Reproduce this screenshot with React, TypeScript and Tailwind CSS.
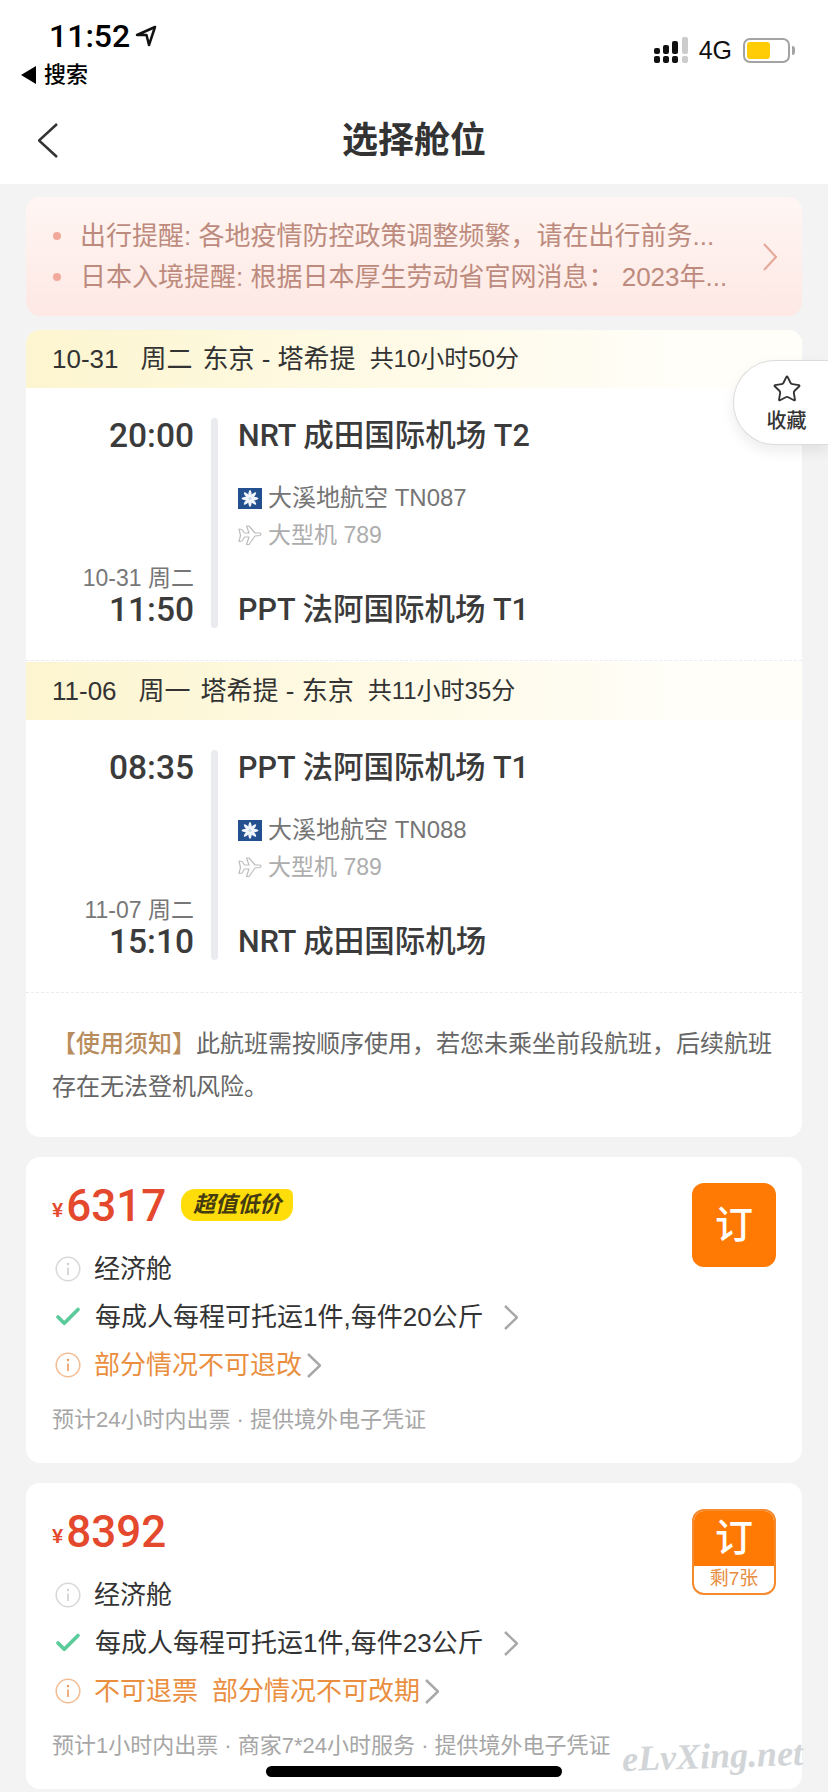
import { Check, Star } from "lucide-react";

const segments = [
  {
    date: "10-31",
    week: "周二",
    route: "东京 - 塔希提",
    total: "共10小时50分",
    depart: "20:00",
    from: "NRT 成田国际机场 T2",
    airline: "大溪地航空 TN087",
    arriveDate: "10-31 周二",
    arrive: "11:50",
    to: "PPT 法阿国际机场 T1",
  },
  {
    date: "11-06",
    week: "周一",
    route: "塔希提 - 东京",
    total: "共11小时35分",
    depart: "08:35",
    from: "PPT 法阿国际机场 T1",
    airline: "大溪地航空 TN088",
    arriveDate: "11-07 周二",
    arrive: "15:10",
    to: "NRT 成田国际机场",
  },
];

const nameFont = { fontFamily: 'Roboto, "Noto Sans CJK SC", sans-serif' };

// tall thin chevron, lucide's is too squat for this screen
function Chevron({ w, h, color, width = 2, left = false }: { w: number; h: number; color: string; width?: number; left?: boolean }) {
  const d = left ? `M${w - 1} 1L1 ${h / 2}L${w - 1} ${h - 1}` : `M1 1L${w - 1} ${h / 2}L1 ${h - 1}`;
  return (
    <svg width={w} height={h} viewBox={`0 0 ${w} ${h}`} fill="none" stroke={color} strokeWidth={width} className="shrink-0">
      <path d={d} />
    </svg>
  );
}

function InfoIcon({ color, dot }: { color: string; dot: string }) {
  return (
    <svg width="26" height="26" viewBox="0 0 26 26" fill="none" className="ml-[3px] shrink-0">
      <circle cx="13" cy="13" r="11.8" stroke={color} strokeWidth="1.5" />
      <circle cx="13" cy="8" r="1.2" fill={dot} />
      <path d="M13 11.5v7.5" stroke={dot} strokeWidth="1.6" />
    </svg>
  );
}

function TahitiLogo() {
  return (
    <svg width="24" height="21" viewBox="0 0 24 21">
      <rect width="24" height="21" fill="#25508f" />
      <g fill="#f1f5fb">
        {[0, 45, 90, 135].map((a) => (
          <ellipse key={a} cx="12" cy="10.5" rx="2" ry="8.5" transform={`rotate(${a} 12 10.5)`} />
        ))}
      </g>
      <circle cx="12" cy="10.5" r="1.5" fill="#c9d6e8" />
    </svg>
  );
}

function PlaneIcon() {
  return (
    <svg width="24" height="21" viewBox="0 0 24 21" fill="none" stroke="#bdbdbd" strokeWidth="1.2" strokeLinejoin="round">
      <path d="M1 4l3 .5 2.5 3.5H11L8.5 1H11l6 7h4.5c1.5 0 2 1.5.5 2.5l-5 .5-6 8.5H8.5L11 12H6.5L4 16l-3 .5 1.5-6z" />
    </svg>
  );
}

function Segment({ s }: { s: (typeof segments)[number] }) {
  return (
    <div className="h-[330px]">
      <div className="flex h-[58px] items-center bg-gradient-to-r from-[#fdf5cf] to-[#fffef8] to-85% pl-[26px] text-[26px] text-[#333333]">
        <span>{s.date}</span>
        <span className="ml-[22px]">{s.week}</span>
        <span className="ml-[10px]">{s.route}</span>
        <span className="ml-[14px] text-[24px]">{s.total}</span>
      </div>
      <div className="mt-[30px] flex h-[210px]">
        <div className="flex w-[168px] flex-col items-end justify-between text-[#3b3b3b]" style={nameFont}>
          <span className="text-[33.5px] leading-[36px] font-medium">{s.depart}</span>
          <div className="flex flex-col items-end">
            <span className="text-[23px] leading-[28px] text-[#777777]" style={{ fontFamily: '"Liberation Sans", "Noto Sans CJK SC", sans-serif' }}>
              {s.arriveDate}
            </span>
            <span className="text-[33.5px] leading-[36px] font-medium">{s.arrive}</span>
          </div>
        </div>
        <div className="ml-[17px] w-[7px] rounded-full bg-[#e9ebef]" />
        <div className="ml-[20px] flex flex-col text-[#3b3b3b]">
          <span className="text-[30.5px] leading-[36px] font-medium" style={nameFont}>
            {s.from}
          </span>
          <div className="mt-[32px] flex flex-col gap-[13px]">
            <div className="flex h-[24px] items-center gap-[6px] text-[24px] text-[#757575]">
              <TahitiLogo />
              <span>{s.airline}</span>
            </div>
            <div className="flex h-[24px] items-center gap-[6px] text-[23px] text-[#adadad]">
              <PlaneIcon />
              <span>大型机 789</span>
            </div>
          </div>
          <span className="mt-auto text-[30.5px] leading-[36px] font-medium" style={nameFont}>
            {s.to}
          </span>
        </div>
      </div>
    </div>
  );
}

function Fare({
  price,
  badge,
  baggage,
  warnings,
  note,
  left,
}: {
  price: string;
  badge?: string;
  baggage: string;
  warnings: string[];
  note: string;
  left?: string;
}) {
  return (
    <div className="relative h-[306px] rounded-[14px] bg-white pt-[27px] pl-[26px]">
      <div className="flex h-[44px] items-center">
        <span className="mt-[8px] mr-[3px] text-[20px] font-semibold text-[#e5492d]">¥</span>
        <span className="text-[44px] leading-[44px] font-medium text-[#e5492d]" style={nameFont}>
          {price}
        </span>
        {badge && (
          <span className="mb-[3px] ml-[15px] flex h-[32px] w-[112px] items-center justify-center rounded-tl-[14px] rounded-tr-[6px] rounded-br-[14px] rounded-bl-[14px] bg-[#ffdd0a] text-[22px] font-bold text-[#443c10] italic">
            {badge}
          </span>
        )}
      </div>
      <div className="mt-[17px] flex h-[48px] items-center">
        <InfoIcon color="#d8d8d8" dot="#cfcfcf" />
        <span className="ml-[13px] text-[26px] text-[#333333]">经济舱</span>
      </div>
      <div className="flex h-[48px] items-center">
        <Check size={30} strokeWidth={3} className="ml-[1px] text-[#5ccb9c]" />
        <span className="ml-[12px] text-[26px] text-[#333333]">{baggage}</span>
        <span className="ml-[20px]">
          <Chevron w={14} h={25} color="#a8a8a8" width={2.5} />
        </span>
      </div>
      <div className="flex h-[48px] items-center">
        <InfoIcon color="#f3bd93" dot="#ee9a5b" />
        <span className="ml-[13px] flex gap-[14px] text-[26px] text-[#ea8f40]">
          {warnings.map((w) => (
            <span key={w}>{w}</span>
          ))}
        </span>
        <span className="ml-[5px]">
          <Chevron w={14} h={25} color="#a8a8a8" width={2.5} />
        </span>
      </div>
      <div className="mt-[13px] text-[22px] leading-[36px] text-[#a6a6a6]">{note}</div>
      <div className={`absolute top-[26px] right-[26px] flex w-[84px] flex-col overflow-hidden rounded-[12px] ${left ? "border-2 border-[#f58a2e] bg-white" : "bg-[#ff7a05]"}`}>
        <div className={`flex items-center justify-center bg-[#ff7a05] text-[38px] font-medium text-white ${left ? "h-[55px]" : "h-[84px]"}`}>
          订
        </div>
        {left && <div className="flex h-[27px] items-center justify-center text-[19px] text-[#e88d3f]">{left}</div>}
      </div>
    </div>
  );
}

export default function App() {
  return (
    <div
      className="relative h-[1792px] w-[828px] overflow-hidden bg-[#f3f3f3]"
      style={{ fontFamily: '"Liberation Sans", "Noto Sans CJK SC", sans-serif' }}
    >
      <div className="h-[184px] bg-white">
        <div className="flex h-[100px] items-start justify-between pr-[33px] pl-[21px]">
          <div className="pt-[18px]">
            <div className="flex items-center pl-[28px] text-[32px] leading-[36px] font-medium text-black" style={nameFont}>
              11:52
              <svg width="22" height="22" viewBox="0 0 22 22" fill="none" stroke="#111111" strokeWidth="2.5" strokeLinejoin="round" className="ml-[5px]">
                <path d="M20 2L2 10h9.5L14 20z" />
              </svg>
            </div>
            <div className="mt-[7px] flex items-center gap-[8px] text-[22px] leading-[28px] font-medium text-black">
              <span className="h-0 w-0 border-y-[9px] border-r-[15px] border-y-transparent border-r-black" />
              搜索
            </div>
          </div>
          <div className="flex items-center pt-[37px]">
            <svg width="34" height="26" viewBox="0 0 34 26">
              <g fill="#111111">
                <rect x="0" y="11" width="6" height="6" rx="2" />
                <rect x="0" y="19" width="6" height="7" rx="2" />
                <rect x="9" y="8" width="6" height="9" rx="2" />
                <rect x="9" y="19" width="6" height="7" rx="2" />
                <rect x="18" y="4" width="6" height="13" rx="2" />
                <rect x="18" y="19" width="6" height="7" rx="2" />
              </g>
              <g fill="#cccccc">
                <rect x="28" y="0" width="6" height="17" rx="2" />
                <rect x="28" y="19" width="6" height="7" rx="2" />
              </g>
            </svg>
            <span className="ml-[11px] text-[25px] leading-[26px] font-medium text-[#111111]">4G</span>
            <div className="ml-[11px] flex h-[25px] w-[47px] items-center rounded-[7px] border-2 border-[#a3a3a3] px-[2px]">
              <div className="h-[17px] w-[23px] rounded-[3px] bg-[#ffcc05]" />
            </div>
            <div className="ml-[2px] h-[9px] w-[3px] rounded-r-full bg-[#a3a3a3]" />
          </div>
        </div>
        <div className="flex h-[78px] items-center pt-[3px] pl-[38px]">
          <Chevron w={20} h={35} color="#333333" width={2.5} left />
          <div className="mr-[58px] flex-1 text-center text-[36px] font-semibold text-[#333333]">选择舱位</div>
        </div>
      </div>

      <div className="flex flex-col px-[26px] pt-[13px]">
        <div className="flex h-[119px] items-center rounded-[14px] bg-gradient-to-b from-[#fff6f3] to-[#fde8e4] pr-[25px] pl-[27px] text-[26px] text-[#bd8b7d]">
          <div className="flex flex-1 flex-col gap-[15px] leading-[26px]">
            <div className="flex items-center gap-[19px]">
              <span className="h-[8px] w-[8px] rounded-full bg-[#f0a99a]" />
              <span>出行提醒: 各地疫情防控政策调整频繁，请在出行前务...</span>
            </div>
            <div className="flex items-center gap-[19px]">
              <span className="h-[8px] w-[8px] rounded-full bg-[#f0a99a]" />
              <span>日本入境提醒: 根据日本厚生劳动省官网消息： 2023年...</span>
            </div>
          </div>
          <Chevron w={14} h={28} color="#e5a797" />
        </div>

        <div className="mt-[14px] overflow-hidden rounded-[14px] bg-white">
          <Segment s={segments[0]} />
          <div className="mb-[1px] h-px border-t border-dashed border-[#ececec]" />
          <Segment s={segments[1]} />
          <div className="border-t border-dashed border-[#ececec] px-[26px] pt-[29px] pb-[29px] text-[24px] leading-[43px] text-[#666666]">
            <span className="font-medium text-[#b98c5e]">【使用须知】</span>
            此航班需按顺序使用，若您未乘坐前段航班，后续航班存在无法登机风险。
          </div>
        </div>

        <div className="mt-[20px] flex flex-col gap-[20px]">
          <Fare
            price="6317"
            badge="超值低价"
            baggage="每成人每程可托运1件,每件20公斤"
            warnings={["部分情况不可退改"]}
            note="预计24小时内出票 · 提供境外电子凭证"
          />
          <Fare
            price="8392"
            baggage="每成人每程可托运1件,每件23公斤"
            warnings={["不可退票", "部分情况不可改期"]}
            note="预计1小时内出票 · 商家7*24小时服务 · 提供境外电子凭证"
            left="剩7张"
          />
        </div>
      </div>

      {/* floating favourite tab, hangs off the right edge */}
      <div className="absolute top-[360px] left-[733px] flex h-[85px] w-[95px] flex-col items-center rounded-l-[42px] border border-r-0 border-[#dcdcdc] bg-white pt-[13px] pl-[11px] shadow-[0_6px_14px_rgba(0,0,0,0.08)]">
        <Star size={30} strokeWidth={1.5} className="text-[#333333]" />
        <span className="mt-[4px] text-[20px] leading-[26px] font-medium text-[#333333]">收藏</span>
      </div>

      {/* home indicator + watermark sit over the last card */}
      <div className="absolute top-[1766px] left-[266px] h-[11px] w-[296px] rounded-full bg-black" />
      <div
        className="absolute top-[1734px] left-[622px] -rotate-2 text-[36px] leading-[44px] font-bold text-[#d2d5d8] italic"
        style={{ fontFamily: '"Liberation Serif", serif' }}
      >
        eLvXing.net
      </div>
    </div>
  );
}
